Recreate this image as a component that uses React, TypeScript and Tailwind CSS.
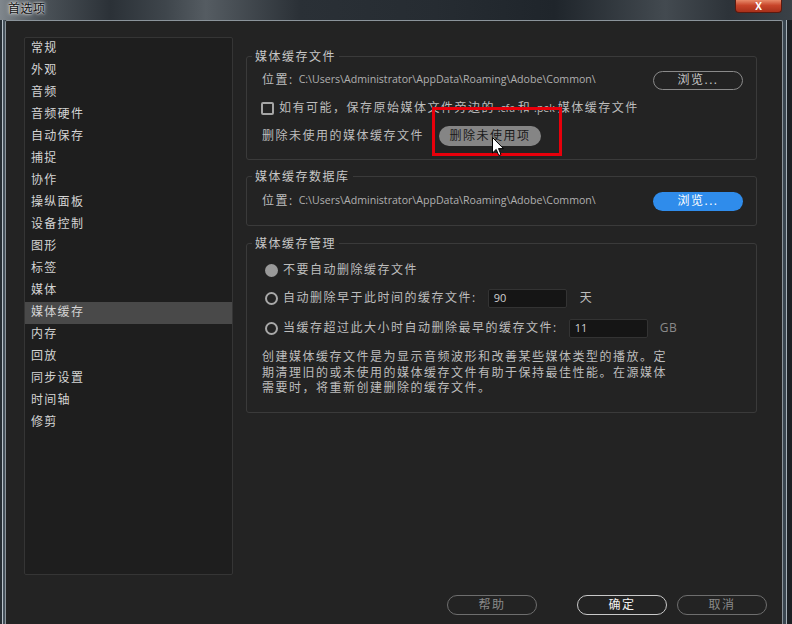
import React from "react";

const items = [
  "常规", "外观", "音频", "音频硬件", "自动保存", "捕捉", "协作", "操纵面板", "设备控制",
  "图形", "标签", "媒体", "媒体缓存", "内存", "回放", "同步设置", "时间轴", "修剪",
];

const PATH = "C:\\Users\\Administrator\\AppData\\Roaming\\Adobe\\Common\\";

function Radio({ checked }: { checked?: boolean }) {
  return checked ? (
    <span className="w-[13px] h-[13px] rounded-full bg-[#9a9a9a] shrink-0" />
  ) : (
    <span className="w-[13px] h-[13px] rounded-full border-2 border-[#a8a8a8] shrink-0" />
  );
}

function NumBox({ v }: { v: string }) {
  return (
    <div className="w-[79px] h-[19px] bg-[#151515] border border-[#333333] rounded-[2px] text-[11px] text-[#d0d0d0] pl-[5px] flex items-center tracking-normal">
      {v}
    </div>
  );
}

function FooterBtn({ label, primary }: { label: string; primary?: boolean }) {
  return (
    <div
      className={
        primary
          ? "w-[90px] h-[20px] rounded-full border-[1.5px] border-[#c8c8c8] text-[#f2f2f2] text-[12px] tracking-[1.5px] flex items-center justify-center"
          : "w-[90px] h-[20px] rounded-full border-[1.5px] border-[#6e6e6e] text-[#8a8a8a] text-[12px] tracking-[1.5px] flex items-center justify-center"
      }
    >
      {label}
    </div>
  );
}

export default function App() {
  return (
    <div className="relative w-[792px] h-[624px] overflow-hidden flex flex-col bg-[#1b2127] font-['Open_Sans','Noto_Sans_CJK_SC',sans-serif]">
      {/* title bar */}
      <div className="h-[20px] shrink-0 flex items-start bg-[linear-gradient(90deg,#80878d_0%,#4d545a_5%,#2b3137_14%,#3f464c_21%,#555c62_26%,#2a3036_38%,#262c32_55%,#1f252b_70%,#434a50_84%,#2d3339_92%,#3a4147_100%)]">
        <span className="ml-[8px] mt-[1px] text-[12px] leading-[16px] text-[#101010] tracking-[0.5px] [text-shadow:0_0_4px_#ffffff,0_0_2px_#ffffff]">
          首选项
        </span>
        <div className="ml-auto mr-[10px] w-[47px] h-[13px] rounded-b-[4px] border border-t-0 border-[#5a1a10] bg-[linear-gradient(180deg,#e88a6a_0%,#c8452a_45%,#a8301a_100%)] flex items-center justify-center text-white text-[10px] font-bold leading-none">
          X
        </div>
      </div>

      <div className="flex flex-1 min-h-0">
        {/* left frame */}
        <div className="w-[5px] flex shrink-0">
          <div className="w-[2px] bg-[#262d33]" />
          <div className="w-[1px] bg-[#b9c2ca]" />
          <div className="w-[2px] bg-[#44505a]" />
        </div>

        {/* client */}
        <div className="flex-1 bg-[#232323] border border-b-0 border-[#8b949b] rounded-t-[2px] flex flex-col pl-[18px] pt-[16px]">
          <div className="flex">
            {/* sidebar */}
            <div className="w-[209px] h-[538px] shrink-0 bg-[#1e1e1e] border border-[#353535] rounded-[2px]">
              {items.map((t, i) => (
                <div
                  key={t}
                  className={
                    i === 12
                      ? "h-[22px] pl-[6px] leading-[20px] text-[12px] tracking-[1.3px] text-[#d4d4d4] bg-[#494949]"
                      : "h-[22px] pl-[6px] leading-[20px] text-[12px] tracking-[1.3px] text-[#d4d4d4]"
                  }
                >
                  {t}
                </div>
              ))}
            </div>

            {/* right column */}
            <div className="ml-[13px] w-[511px] mt-[11px] flex flex-col text-[12px] tracking-[1.5px] text-[#bdbdbd]">
              {/* group 1 */}
              <fieldset className="border border-[#3a3a3a] rounded-[3px] pl-[5px] pr-[13px] pb-[12px]">
                <legend className="px-[3px] leading-[17px] text-[#c6c6c6]">媒体缓存文件</legend>
                <div className="pl-[10px] pt-[4px]">
                  <div className="h-[22px] flex items-center">
                    <span>位置:</span>
                    <span className="ml-[5px] text-[10.6px] tracking-normal text-[#b0b0b0]">{PATH}</span>
                    <div className="ml-auto w-[90px] h-[19px] rounded-full border-[1.5px] border-[#8a8a8a] text-[#c8c8c8] flex items-center justify-center">
                      浏览...
                    </div>
                  </div>
                  <div className="mt-[6px] h-[22px] flex items-center">
                    <span className="ml-[-1px] w-[13px] h-[13px] border-2 border-[#a5a5a5] rounded-[2px] shrink-0" />
                    <span className="ml-[5px] whitespace-pre">
                      如有可能，保存原始媒体文件旁边的
                      <span className="text-[10.6px] tracking-normal"> .cfa </span>和
                      <span className="text-[10.6px] tracking-normal"> .pek </span>媒体缓存文件
                    </span>
                  </div>
                  <div className="mt-[6px] h-[22px] flex items-center">
                    <span>删除未使用的媒体缓存文件</span>
                    <div className="ml-[15px] w-[102px] h-[20px] rounded-full bg-[#858585] text-[#1a1a1a] flex items-center justify-center">
                      删除未使用项
                    </div>
                  </div>
                </div>
              </fieldset>

              {/* group 2 */}
              <fieldset className="mt-[8px] border border-[#3a3a3a] rounded-[3px] pl-[5px] pr-[13px] pb-[13px]">
                <legend className="px-[3px] leading-[17px] text-[#c6c6c6]">媒体缓存数据库</legend>
                <div className="pl-[10px] pt-[5px]">
                  <div className="h-[22px] flex items-center">
                    <span>位置:</span>
                    <span className="ml-[5px] text-[10.6px] tracking-normal text-[#b0b0b0]">{PATH}</span>
                    <div className="ml-auto w-[90px] h-[19px] rounded-full bg-[#2f8ceb] text-white flex items-center justify-center">
                      浏览...
                    </div>
                  </div>
                </div>
              </fieldset>

              {/* group 3 */}
              <fieldset className="mt-[9px] border border-[#3a3a3a] rounded-[3px] pl-[5px] pr-[13px] pb-[16px]">
                <legend className="px-[3px] leading-[17px] text-[#c6c6c6]">媒体缓存管理</legend>
                <div className="pl-[10px] pt-[7px]">
                  <div className="h-[22px] pl-[3px] flex items-center">
                    <Radio checked />
                    <span className="ml-[5px]">不要自动删除缓存文件</span>
                  </div>
                  <div className="mt-[6px] h-[22px] pl-[3px] flex items-center">
                    <Radio />
                    <span className="ml-[5px]">自动删除早于此时间的缓存文件:</span>
                    <div className="ml-[11px]">
                      <NumBox v="90" />
                    </div>
                    <span className="ml-[13px]">天</span>
                  </div>
                  <div className="mt-[8px] h-[22px] pl-[3px] flex items-center">
                    <Radio />
                    <span className="ml-[5px]">当缓存超过此大小时自动删除最早的缓存文件:</span>
                    <div className="ml-[11px]">
                      <NumBox v="11" />
                    </div>
                    <span className="ml-[12px] text-[#8a8a8a] tracking-[0.5px]">GB</span>
                  </div>
                  <p className="mt-[10px] leading-[15.5px]">
                    创建媒体缓存文件是为显示音频波形和改善某些媒体类型的播放。定
                    <br />
                    期清理旧的或未使用的媒体缓存文件有助于保持最佳性能。在源媒体
                    <br />
                    需要时，将重新创建删除的缓存文件。
                  </p>
                </div>
              </fieldset>
            </div>
          </div>

          {/* footer */}
          <div className="mt-[20px] pr-[15px] flex justify-end">
            <FooterBtn label="帮助" />
            <div className="ml-[40px]">
              <FooterBtn label="确定" primary />
            </div>
            <div className="ml-[10px]">
              <FooterBtn label="取消" />
            </div>
          </div>
        </div>

        {/* right frame */}
        <div className="w-[9px] flex shrink-0">
          <div className="w-[3px] bg-[#3a4650]" />
          <div className="w-[1px] bg-[#a6b0b8]" />
          <div className="w-[5px] bg-[#1c2024]" />
        </div>
      </div>

      {/* red annotation box */}
      <div className="absolute left-[432px] top-[107px] w-[130px] h-[49px] border-[3px] border-[#e8000b]" />

      {/* mouse cursor */}
      <svg className="absolute left-[492px] top-[137px]" width="13" height="20" viewBox="0 0 13 20">
        <path d="M0.5 0.5 L0.5 16 L4.2 12.4 L6.8 18.5 L9 17.6 L6.5 11.6 L11.5 11.6 Z" fill="#ffffff" stroke="#000000" strokeWidth="1" strokeLinejoin="round" />
      </svg>
    </div>
  );
}
